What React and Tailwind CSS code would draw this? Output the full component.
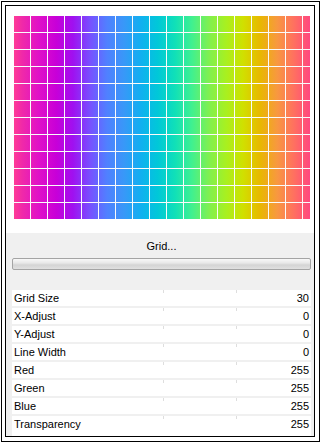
import React from "react";

const rows = [
  ["Grid Size", "30"],
  ["X-Adjust", "0"],
  ["Y-Adjust", "0"],
  ["Line Width", "0"],
  ["Red", "255"],
  ["Green", "255"],
  ["Blue", "255"],
  ["Transparency", "255"],
];

const stops = [
  [0, "#ff3c96"],
  [2.7, "#f02aa8"],
  [8.4, "#e010c8"],
  [14.2, "#c800d8"],
  [19.9, "#a010f0"],
  [25.7, "#7850ff"],
  [31.4, "#5080ff"],
  [37.2, "#3898f8"],
  [42.9, "#10b0f0"],
  [48.6, "#00c8d8"],
  [54.4, "#10e0b8"],
  [60.1, "#40f090"],
  [65.9, "#80f050"],
  [71.6, "#a8f020"],
  [77.4, "#d0e000"],
  [83.1, "#e8b800"],
  [88.9, "#f89840"],
  [94.6, "#ff7060"],
  [100, "#ff4880"],
];

function GridPreview() {
  const w = 296;
  const h = 203;
  const vLines = [];
  for (let x = 16; x < w; x += 17) vLines.push(x);
  const hLines = [];
  for (let y = 16; y < h; y += 17) hLines.push(y);

  return (
    <svg width={w} height={h} className="block">
      <defs>
        <linearGradient id="rainbow" x1="0" y1="0" x2="1" y2="0">
          {stops.map(([o, c]) => (
            <stop key={o} offset={`${o}%`} stopColor={c} />
          ))}
        </linearGradient>
      </defs>
      <rect x="0" y="0" width={w} height={h} fill="url(#rainbow)" />
      {vLines.map((x) => (
        <rect key={"v" + x} x={x} y="0" width="1" height={h} fill="#fafafa" />
      ))}
      {hLines.map((y) => (
        <rect key={"h" + y} x="0" y={y} width={w} height="1" fill="#fafafa" />
      ))}
    </svg>
  );
}

export default function App() {
  return (
    <div className="w-[320px] h-[442px] bg-white pl-px pt-px font-['Liberation_Sans',Arial,sans-serif] text-[11px] text-black">
      <div className="w-[319px] h-[441px] border border-black pl-[3px] pt-[3px] pr-[4px] pb-[4px]">
        <div className="w-[310px] h-[432px] border border-black flex flex-col">
          {/* preview */}
          <div className="h-[227px] bg-white pl-[8px] pt-[10px]">
            <GridPreview />
          </div>

          {/* settings panel */}
          <div className="flex-1 bg-[#f0f0f0] flex flex-col pl-[6px] pr-[3px]">
            <div className="h-[25px] flex items-center justify-center leading-4 pt-[1px]">
              Grid...
            </div>
            <div className="h-[12px] rounded-[2px] border border-[#a4a4a4] bg-[linear-gradient(to_bottom,#f8f8f8,#e8e8e8_40%,#d4d4d4_60%,#e0e0e0)]" />
            <div className="h-[20px]" />
            <div className="flex-1 flex flex-col gap-[2px]">
              {rows.map(([label, value], i) => (
                <div
                  key={label}
                  className={`bg-white flex items-start leading-4 ${
                    i === rows.length - 1 ? "flex-1" : "h-4"
                  }`}
                >
                  <span className="w-[151px] pl-[2px] whitespace-nowrap">{label}</span>
                  <span className="w-px h-[3px] bg-[#dedede]" />
                  <span className="w-[72px]" />
                  <span className="w-px h-[3px] bg-[#dedede]" />
                  <span className="flex-1 text-right pr-[2px]">{value}</span>
                </div>
              ))}
            </div>
          </div>
        </div>
      </div>
    </div>
  );
}
